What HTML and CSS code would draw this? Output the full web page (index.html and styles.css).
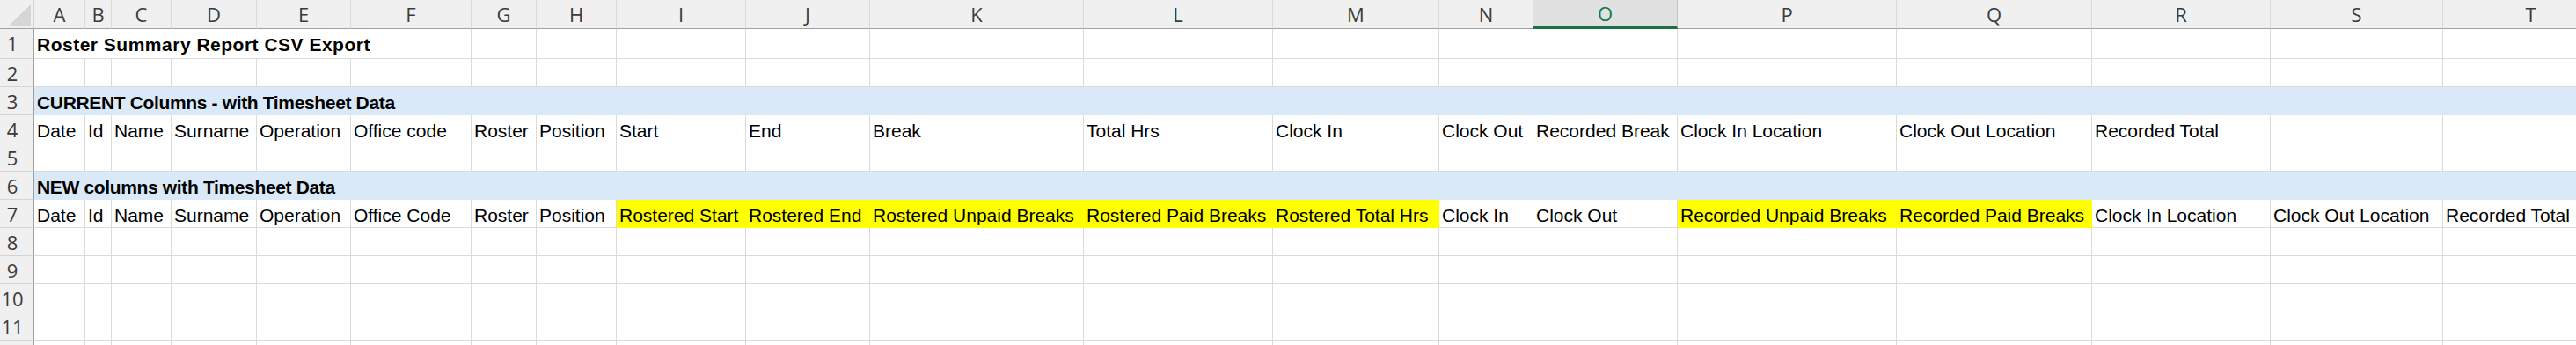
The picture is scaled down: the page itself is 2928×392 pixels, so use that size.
FILE: index.html
```html
<!DOCTYPE html>
<html>
    <head>
        <title>Roster Summary Report CSV Export</title>
        <link rel="stylesheet" href="styles.css">
    </head>
    <body>
        <div class="sheet">
            <!-- column headers -->
            <div class="corner">
                <svg width="38" height="32" viewBox="0 0 38 32"><polygon points="35,5 35,29 10,29" fill="#d6d6d6"/></svg>
            </div>
            <div class="col">A</div><div class="col">B</div><div class="col">C</div><div class="col">D</div>
            <div class="col">E</div><div class="col">F</div><div class="col">G</div><div class="col">H</div>
            <div class="col">I</div><div class="col">J</div><div class="col">K</div><div class="col">L</div>
            <div class="col">M</div><div class="col pre-sel">N</div><div class="col sel">O</div><div class="col">P</div>
            <div class="col">Q</div><div class="col">R</div><div class="col">S</div><div class="col">T</div>

            <!-- row 1 -->
            <div class="rn">1</div>
            <div class="title">Roster Summary Report CSV Export</div>
            <div></div><div></div><div></div><div></div><div></div><div></div><div></div>
            <div></div><div></div><div></div><div></div><div></div><div></div><div></div>

            <!-- row 2 -->
            <div class="rn">2</div>
            <div></div><div></div><div></div><div></div><div></div><div></div><div></div><div></div><div></div><div></div>
            <div></div><div></div><div></div><div></div><div></div><div></div><div></div><div></div><div></div><div></div>

            <!-- row 3 -->
            <div class="rn">3</div>
            <div class="band">CURRENT Columns - with Timesheet Data</div>

            <!-- row 4 -->
            <div class="rn">4</div>
            <div>Date</div><div>Id</div><div>Name</div><div>Surname</div><div>Operation</div>
            <div>Office code</div><div>Roster</div><div>Position</div><div>Start</div><div>End</div>
            <div>Break</div><div>Total Hrs</div><div>Clock In</div><div>Clock Out</div><div>Recorded Break</div>
            <div>Clock In Location</div><div>Clock Out Location</div><div>Recorded Total</div><div></div><div></div>

            <!-- row 5 -->
            <div class="rn">5</div>
            <div></div><div></div><div></div><div></div><div></div><div></div><div></div><div></div><div></div><div></div>
            <div></div><div></div><div></div><div></div><div></div><div></div><div></div><div></div><div></div><div></div>

            <!-- row 6 -->
            <div class="rn">6</div>
            <div class="band">NEW columns with Timesheet Data</div>

            <!-- row 7 -->
            <div class="rn">7</div>
            <div>Date</div><div>Id</div><div>Name</div><div>Surname</div><div>Operation</div>
            <div>Office Code</div><div>Roster</div><div>Position</div>
            <div class="hl">Rostered Start</div><div class="hl">Rostered End</div><div class="hl">Rostered Unpaid Breaks</div>
            <div class="hl">Rostered Paid Breaks</div><div class="hl">Rostered Total Hrs</div>
            <div>Clock In</div><div>Clock Out</div>
            <div class="hl">Recorded Unpaid Breaks</div><div class="hl">Recorded Paid Breaks</div>
            <div>Clock In Location</div><div>Clock Out Location</div><div>Recorded Total</div>

            <!-- rows 8 - 12 (12 is only a sliver at the bottom edge) -->
            <div class="rn">8</div>
            <div></div><div></div><div></div><div></div><div></div><div></div><div></div><div></div><div></div><div></div>
            <div></div><div></div><div></div><div></div><div></div><div></div><div></div><div></div><div></div><div></div>
            <div class="rn">9</div>
            <div></div><div></div><div></div><div></div><div></div><div></div><div></div><div></div><div></div><div></div>
            <div></div><div></div><div></div><div></div><div></div><div></div><div></div><div></div><div></div><div></div>
            <div class="rn">10</div>
            <div></div><div></div><div></div><div></div><div></div><div></div><div></div><div></div><div></div><div></div>
            <div></div><div></div><div></div><div></div><div></div><div></div><div></div><div></div><div></div><div></div>
            <div class="rn">11</div>
            <div></div><div></div><div></div><div></div><div></div><div></div><div></div><div></div><div></div><div></div>
            <div></div><div></div><div></div><div></div><div></div><div></div><div></div><div></div><div></div><div></div>
            <div class="rn"></div>
            <div></div><div></div><div></div><div></div><div></div><div></div><div></div><div></div><div></div><div></div>
            <div></div><div></div><div></div><div></div><div></div><div></div><div></div><div></div><div></div><div></div>
        </div>
    </body>
</html>
```

FILE: styles.css
```css
body {
    margin: 0;
    padding: 0;
    overflow: hidden;
    background: #fff;
}
.sheet {
    display: grid;
    grid-template-columns: 39px 58px 30px 68px 97px 107px 137px 74px 91px 147px 141px 243px 215px 189px 107px 164px 249px 222px 203px 196px 200px;
    grid-template-rows: 33px 34px repeat(11, 32px);
    font-family: "Liberation Sans", Arial, sans-serif;
    font-size: 21px;
    color: #000;
}
.sheet > div {
    box-sizing: border-box;
    border-right: 1px solid #dadada;
    border-bottom: 1px solid #dadada;
    padding: 6px 0 0 3px;
    line-height: 24px;
    white-space: nowrap;
}
.sheet > .corner {
    padding: 0;
    background: #f0f0f0;
    border-right-color: #d4d4d4;
    border-bottom-color: #a0a0a0;
}
.corner svg {
    display: block;
}
.sheet > .col {
    padding: 0;
    background: #f0f0f0;
    font-family: "Open Sans", "Noto Sans", sans-serif;
    font-size: 22px;
    line-height: 32px;
    color: #3b3b3b;
    text-align: center;
    border-right-color: #dadada;
    border-bottom-color: #a0a0a0;
}
.sheet > .pre-sel {
    border-right-color: #c2c2c2;
}
.sheet > .sel {
    background: #e1e1e1;
    color: #107c41;
    line-height: 30px;
    border-right-color: #c2c2c2;
    border-bottom: 3px solid #1e7145;
}
.sheet > .rn {
    padding: 0 10px 0 0;
    background: #f0f0f0;
    font-family: "Open Sans", "Noto Sans", sans-serif;
    font-size: 22px;
    line-height: 32px;
    color: #3b3b3b;
    text-align: center;
    border-right-color: #a0a0a0;
    border-bottom-color: #d4d4d4;
}
.title {
    grid-column: 2 / 8;
    font-weight: bold;
    letter-spacing: 0.5px;
}
.sheet > .band {
    grid-column: 2 / -1;
    background: #dae9f8;
    border-color: #dae9f8;
    font-weight: bold;
    letter-spacing: -0.35px;
}
.sheet > .hl {
    background: #ffff00;
    border-color: #ffff00;
}
```
